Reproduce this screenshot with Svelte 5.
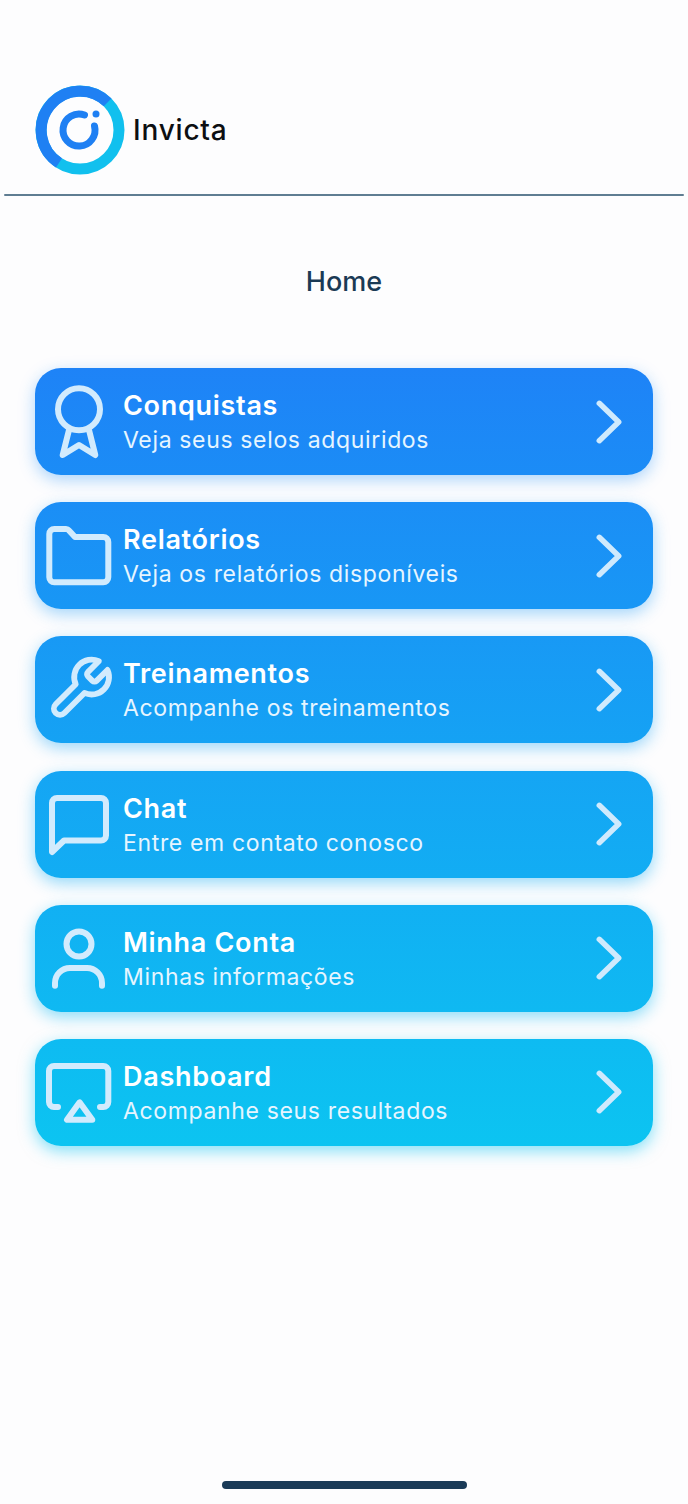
<script>
  const items = [
    { title: "Conquistas", sub: "Veja seus selos adquiridos", icon: "medal" },
    { title: "Relatórios", sub: "Veja os relatórios disponíveis", icon: "folder" },
    { title: "Treinamentos", sub: "Acompanhe os treinamentos", icon: "wrench" },
    { title: "Chat", sub: "Entre em contato conosco", icon: "chat" },
    { title: "Minha Conta", sub: "Minhas informações", icon: "user" },
    { title: "Dashboard", sub: "Acompanhe seus resultados", icon: "screen" },
  ];

  // the whole list runs from blue to cyan
  const from = [30, 131, 247];
  const to = [11, 198, 241];
  function mix(t) {
    return from.map((c, i) => Math.round(c + (to[i] - c) * t)).join(",");
  }
  function cardStyle(i) {
    const a = mix(i / 6);
    const b = mix((i + 0.8) / 6);
    const glow = 0.36 + i * 0.03;
    return `background: linear-gradient(180deg, rgb(${a}), rgb(${b})); box-shadow: 0 5px 16px rgba(${b}, ${glow})`;
  }
</script>

<div class="page">
  <header class="header">
    <svg class="logo" width="90" height="90" viewBox="0 0 90 90" fill="none">
      <circle cx="45" cy="45" r="39" stroke="#11c0ee" stroke-width="11" />
      <path d="M72.6 17.4A39 39 0 1 0 24 77.9" stroke="#1f80f3" stroke-width="11" />
      <path d="M49.5 30A16 16 0 1 0 59.5 41" stroke="#1f80f3" stroke-width="7" stroke-linecap="round" />
      <circle cx="61" cy="29" r="3.5" fill="#1f80f3" />
    </svg>
    <span class="brand">Invicta</span>
  </header>
  <div class="divider"></div>

  <h1 class="heading">Home</h1>

  <nav class="list">
    {#each items as item, i}
      <div class="card" style={cardStyle(i)}>
        <svg class="icon" width="88" height="107" viewBox="0 0 88 107" fill="none">
          {#if item.icon === "medal"}
            <circle cx="44" cy="41.3" r="21" />
            <path d="M34 62 27.7 87 44 77 60.3 87 54 62" />
          {:else if item.icon === "folder"}
            <path d="M14.3 32a5 5 0 0 1 5-5H31a4 4 0 0 1 3 1.4L40 35H68.300a5 5 0 0 1 5 5V75.300a5 5 0 0 1-5 5H19.300a5 5 0 0 1-5-5Z" />
          {:else if item.icon === "wrench"}
            <path
              transform="translate(10.2 17.9) scale(2.9)"
              stroke-width="2"
              d="M14.7 6.3a1 1 0 0 0 0 1.4l1.6 1.6a1 1 0 0 0 1.4 0l3.77-3.77a6 6 0 0 1-7.94 7.94l-6.91 6.91a2.12 2.12 0 0 1-3-3l6.91-6.91a6 6 0 0 1 7.94-7.94l-3.76 3.76z"
            />
          {:else if item.icon === "chat"}
            <path d="M17 81V32a5 5 0 0 1 5-5H66a5 5 0 0 1 5 5V64.500a5 5 0 0 1-5 5H29Z" />
          {:else if item.icon === "user"}
            <circle cx="44" cy="39" r="12.500" />
            <path d="M20 80.700V78a15 15 0 0 1 15-15H52a15 15 0 0 1 15 15V80.700" />
          {:else}
            <path d="M23 68H19a5 5 0 0 1-5-5V32a5 5 0 0 1 5-5H68.300a5 5 0 0 1 5 5V63a5 5 0 0 1-5 5H65" />
            <path d="M32 80.700H57.300L44.600 63.300Z" />
          {/if}
        </svg>
        <div class="text">
          <div class="title">{item.title}</div>
          <div class="sub">{item.sub}</div>
        </div>
        <svg class="chevron" width="30" height="50" viewBox="0 0 30 50" fill="none">
          <path d="M5.300 6.300 24.700 25 5.300 43.700" />
        </svg>
      </div>
    {/each}
  </nav>

  <div class="home-bar"></div>
</div>

<style>
  :global(body) {
    background: #fdfdfe;
  }

  .page {
    position: relative;
    height: 1504px;
    overflow: hidden;
    font-family: Inter, "Noto Sans", sans-serif;
    background: #fdfdfe;
  }

  .header {
    display: flex;
    align-items: center;
    gap: 8px;
    padding: 85px 0 0 35px;
  }

  .logo {
    flex: none;
  }

  .brand {
    font-size: 28px;
    font-weight: 500;
    letter-spacing: 0.8px;
    color: #0d0f12;
  }

  .divider {
    height: 2px;
    margin: 19px 4px 0;
    border-radius: 2px;
    background: #5f7d92;
  }

  .heading {
    margin: 68px 0 0;
    font-size: 27px;
    line-height: 36px;
    font-weight: 500;
    text-align: center;
    color: #1a3a55;
  }

  .list {
    display: flex;
    flex-direction: column;
    gap: 27.2px;
    margin: 68px 35px 0;
  }

  .card {
    display: flex;
    align-items: center;
    height: 107px;
    border-radius: 26px;
  }

  .icon {
    flex: none;
    stroke: #d2ebfd;
    stroke-width: 6;
    stroke-linecap: round;
    stroke-linejoin: round;
  }

  .text {
    flex: 1;
    min-width: 0;
    padding-top: 3px;
  }

  .title {
    font-size: 27px;
    line-height: 34px;
    font-weight: 600;
    letter-spacing: 0.7px;
    color: #fff;
  }

  .sub {
    font-size: 23px;
    line-height: 34px;
    font-weight: 400;
    letter-spacing: 0.65px;
    color: #e6f5ff;
  }

  .chevron {
    flex: none;
    margin-right: 29px;
    stroke: #cfeafd;
    stroke-width: 5.500;
    stroke-linecap: round;
    stroke-linejoin: round;
  }

  .home-bar {
    position: absolute;
    left: 222px;
    bottom: 15px;
    width: 245px;
    height: 8px;
    border-radius: 4px;
    background: #1a3a57;
  }
</style>
